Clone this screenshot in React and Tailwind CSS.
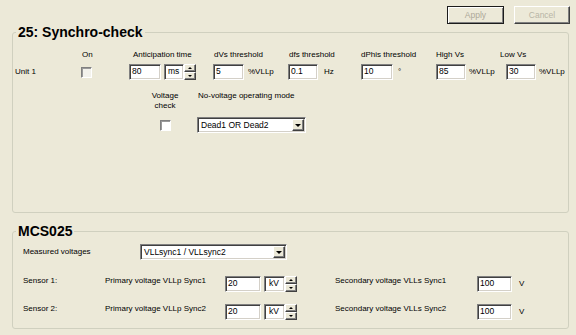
const SUNK =
  'border border-[#808080] border-r-white border-b-white shadow-[inset_1px_1px_0_#404040,inset_-1px_-1px_0_#d4d0c8]'
const RAISED =
  'border border-t-white border-l-white border-r-[#404040] border-b-[#404040] shadow-[inset_-1px_-1px_0_#808080]'

function Field({ w, children, extra = '' }) {
  return (
    <div className={`h-[16px] shrink-0 bg-white pl-[2px] pt-[1px] text-[8.5px] leading-[11px] ${SUNK} ${w} ${extra}`}>
      {children}
    </div>
  )
}

function Spin() {
  return (
    <div className="flex h-[16px] w-[12px] shrink-0 flex-col">
      <div className={`flex flex-1 items-center justify-center bg-[#ece9d8] ${RAISED}`}>
        <div className="h-0 w-0 border-x-[2px] border-b-[2px] border-x-transparent border-b-black" />
      </div>
      <div className={`flex flex-1 items-center justify-center bg-[#ece9d8] ${RAISED}`}>
        <div className="h-0 w-0 border-x-[2px] border-t-[2px] border-x-transparent border-t-black" />
      </div>
    </div>
  )
}

function Combo({ w, value }) {
  return (
    <div className={`flex h-[16px] shrink-0 items-center justify-between bg-white pl-[3px] text-[8.5px] ${SUNK} ${w}`}>
      <span className="leading-[11px]">{value}</span>
      <div className={`mr-[1px] flex h-[12px] w-[12px] items-center justify-center bg-[#ece9d8] ${RAISED}`}>
        <div className="h-0 w-0 border-x-[3px] border-t-[3px] border-x-transparent border-t-black" />
      </div>
    </div>
  )
}

function Check({ fill }) {
  return (
    <div
      className={`h-[11px] w-[11px] border border-[#808080] border-r-white border-b-white shadow-[inset_1px_1px_0_#9a9a9a] ${fill}`}
    />
  )
}

function Col({ w, label, pad = '', children }) {
  return (
    <div className={`flex shrink-0 flex-col gap-[4px] ${w}`}>
      <div className={`h-[10px] whitespace-nowrap ${pad}`}>{label}</div>
      <div className="flex h-[16px] items-center">{children}</div>
    </div>
  )
}

function Box({ title, h, extra = '', children }) {
  return (
    <fieldset className={`ml-[12px] w-[557px] min-w-0 rounded-[3px] border border-[#d0d0bf] ${h} ${extra}`}>
      <legend className="ml-[3px] px-[2px] text-[14px] font-bold leading-[16px]">{title}</legend>
      {children}
    </fieldset>
  )
}

export default function App() {
  return (
    <div className="h-[335px] w-[576px] overflow-hidden bg-[#ece9d8] font-['Liberation_Sans',Arial,sans-serif] text-[8px] leading-[10px] text-black">
      <div className="flex h-[24px] justify-end gap-[10px] pr-[6px] pt-[6px]">
        <button className="flex h-[18px] w-[57px] items-center justify-center border border-[#1c1c1c] bg-[#ece9d8] text-[8.5px] text-[#aca899] shadow-[inset_1px_1px_0_#fff,inset_-1px_-1px_0_#808080]">
          Apply
        </button>
        <button className={`flex h-[18px] w-[56px] items-center justify-center bg-[#ece9d8] text-[8.5px] text-[#b8b5a6] ${RAISED}`}>
          Cancel
        </button>
      </div>

      <Box title="25: Synchro-check" h="h-[189px]">
        <div className="flex pl-[2px] pt-[10px]">
          <div className="flex w-[66px] shrink-0 flex-col gap-[4px]">
            <div className="h-[10px]" />
            <div className="flex h-[16px] items-center">Unit 1</div>
          </div>
          <Col w="w-[48px]" label="On" pad="pl-[1px]">
            <Check fill="bg-[#f3f2ec]" />
          </Col>
          <Col w="w-[84px]" label="Anticipation time" pad="pl-[4px]">
            <Field w="w-[32px]">80</Field>
            <Field w="w-[20px]" extra="ml-[3px] pl-[3px]">ms</Field>
            <Spin />
          </Col>
          <Col w="w-[75px]" label="dVs threshold" pad="pl-[1px]">
            <Field w="w-[31px]">5</Field>
            <span className="ml-[4px]">%VLLp</span>
          </Col>
          <Col w="w-[73px]" label="dfs threshold" pad="pl-[1px]">
            <Field w="w-[30px]">0.1</Field>
            <span className="ml-[6px]">Hz</span>
          </Col>
          <Col w="w-[75px]" label="dPhis threshold">
            <Field w="w-[32px]">10</Field>
            <span className="ml-[5px]">°</span>
          </Col>
          <Col w="w-[64px]" label="High Vs">
            <Field w="w-[30px]">85</Field>
            <span className="ml-[3px]">%VLLp</span>
          </Col>
          <Col w="w-[66px]" label="Low Vs">
            <Field w="w-[30px]" extra="ml-[6px]">30</Field>
            <span className="ml-[3px]">%VLLp</span>
          </Col>
        </div>

        <div className="mt-[11px] flex">
          <div className="ml-[132px] flex w-[40px] shrink-0 flex-col items-center gap-[6px]">
            <div className="h-[20px] text-center">
              Voltage
              <br />
              check
            </div>
            <div className="flex h-[16px] items-center">
              <Check fill="bg-white" />
            </div>
          </div>
          <div className="ml-[12px] flex flex-col gap-[6px]">
            <div className="h-[20px] pl-[1px]">No-voltage operating mode</div>
            <Combo w="w-[109px]" value="Dead1 OR Dead2" />
          </div>
        </div>
      </Box>

      <Box title="MCS025" h="h-[106px]" extra="mt-[10px]">
        <div className="flex flex-col pl-[10px] pt-[5px]">
          <div className="flex h-[16px] items-center">
            <span className="w-[117px] shrink-0">Measured voltages</span>
            <Combo w="w-[147px]" value="VLLsync1 / VLLsync2" />
          </div>
          {[
            ['Sensor 1:', 'Primary voltage VLLp Sync1', 'Secondary voltage VLLs Sync1', 'mt-[16px]'],
            ['Sensor 2:', 'Primary voltage VLLp Sync2', 'Secondary voltage VLLs Sync2', 'mt-[12px]'],
          ].map(([s, p, sec, mt]) => (
            <div key={s} className={`flex h-[16px] items-center ${mt}`}>
              <span className="w-[82px] shrink-0 self-start">{s}</span>
              <span className="w-[120px] shrink-0 self-start">{p}</span>
              <Field w="w-[36px]">20</Field>
              <Field w="w-[21px]" extra="ml-[3px] pl-[4px]">kV</Field>
              <Spin />
              <span className="ml-[38px] w-[142px] shrink-0 self-start">{sec}</span>
              <Field w="w-[35px]">100</Field>
              <span className="ml-[7px]">V</span>
            </div>
          ))}
        </div>
      </Box>
    </div>
  )
}
